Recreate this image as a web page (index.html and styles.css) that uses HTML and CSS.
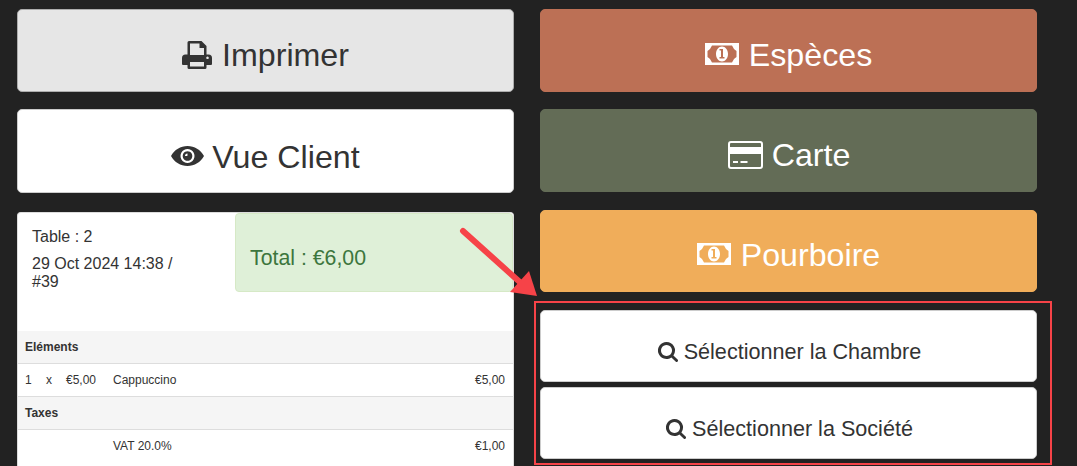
FILE: index.html
```html
<!DOCTYPE html>
<html lang="en">
<head>
    <meta charset="UTF-8">
    <meta name="viewport" content="width=device-width, initial-scale=1.0">
    <title>Paiement</title>
    <link rel="stylesheet" href="styles.css">
</head>
<body>
<div class="container">
    <div class="col col-left">
        <button class="btn btn-big btn-print">
            <svg class="icon" width="30" height="28" viewBox="0 0 30 28"><path fill-rule="evenodd" d="M5.500 1.500A1.500 1.500 0 0 1 7 0h12.500l5 5v8.500h2A3.500 3.500 0 0 1 30 17v6a1 1 0 0 1-1 1h-4.500v2.500a1.500 1.500 0 0 1-1.500 1.500H7a1.500 1.500 0 0 1-1.500-1.500V24H1a1 1 0 0 1-1-1v-6A3.500 3.500 0 0 1 3.500 13.500h2zM8 2.500V14h14V7h-4.500V2.500zM8 21v4.500h14V21zM25.500 15.500a1.300 1.300 0 1 0 .01 0z"/></svg>
            Imprimer
        </button>
        <button class="btn btn-big btn-view">
            <svg class="icon icon-eye" width="33" height="20" viewBox="0 0 33 20"><path fill-rule="evenodd" d="M0 10C3.500 3.800 9.500 0 16.500 0S29.500 3.800 33 10c-3.500 6.200-9.500 10-16.500 10S3.500 16.200 0 10zM16.500 3a7 7 0 1 0 .01 0zM16.500 5.200a4.800 4.800 0 1 1-.01 0zM16.500 7.500a2.500 2.500 0 0 0-2.500 2.500h2.200a.8.8 0 0 1 .3-.6z"/></svg>
            Vue Client
        </button>
        <div class="receipt">
            <div class="receipt-head">
                <div class="receipt-meta">
                    <p>Table : 2</p>
                    <p>29 Oct 2024 14:38 / #39</p>
                </div>
                <div class="receipt-total">Total : €6,00</div>
            </div>
            <table class="lines">
                <colgroup>
                    <col class="c-qty"><col class="c-x"><col class="c-price"><col><col class="c-sum">
                </colgroup>
                <tbody>
                    <tr class="group"><td colspan="5">Eléments</td></tr>
                    <tr><td>1</td><td>x</td><td>€5,00</td><td>Cappuccino</td><td class="num">€5,00</td></tr>
                    <tr class="group"><td colspan="5">Taxes</td></tr>
                    <tr><td></td><td></td><td></td><td>VAT 20.0%</td><td class="num">€1,00</td></tr>
                </tbody>
            </table>
        </div>
    </div>
    <div class="col col-right">
        <button class="btn btn-big btn-cash">
            <svg class="icon icon-money" width="34" height="22" viewBox="0 0 34 22"><path fill-rule="evenodd" d="M0 0h34v22H0zM7 2.500L5 6 2.500 8v6L5 16l2 3.500h20l2-3.500 2.500-2V8L29 6l-2-3.500zM17 3.500c3.300 0 6 3.400 6 7.500s-2.700 7.500-6 7.500-6-3.400-6-7.500 2.700-7.500 6-7.500zM14.500 6V7.500H16V14h-1.500v1.500h5V14H18V6z"/></svg>
            Espèces
        </button>
        <button class="btn btn-big btn-card">
            <svg class="icon" width="35" height="28" viewBox="0 0 35 28"><path fill-rule="evenodd" d="M3 0h29a3 3 0 0 1 3 3v22a3 3 0 0 1-3 3H3a3 3 0 0 1-3-3V3a3 3 0 0 1 3-3zM3 2a1 1 0 0 0-1 1v3h31V3a1 1 0 0 0-1-1zM2 13v12a1 1 0 0 0 1 1h29a1 1 0 0 0 1-1V13zM5 20h5v2H5zM12.500 20h7v2h-7z"/></svg>
            Carte
        </button>
        <button class="btn btn-big btn-tip">
            <svg class="icon icon-money" width="34" height="22" viewBox="0 0 34 22"><path fill-rule="evenodd" d="M0 0h34v22H0zM7 2.500L5 6 2.500 8v6L5 16l2 3.500h20l2-3.500 2.500-2V8L29 6l-2-3.500zM17 3.500c3.300 0 6 3.400 6 7.500s-2.700 7.500-6 7.500-6-3.400-6-7.500 2.700-7.500 6-7.500zM14.500 6V7.500H16V14h-1.500v1.500h5V14H18V6z"/></svg>
            Pourboire
        </button>
        <div class="select-group">
            <button class="btn btn-select">
                <svg class="icon" width="20" height="20" viewBox="0 0 20 20"><path fill-rule="evenodd" d="M8.500 0a8.500 8.500 0 0 1 6.900 13.400l4.200 4.200a1.400 1.400 0 0 1-2 2l-4.200-4.200A8.500 8.500 0 1 1 8.500 0zM8.500 3a5.500 5.500 0 1 0 .01 0z"/></svg>
                Sélectionner la Chambre
            </button>
            <button class="btn btn-select">
                <svg class="icon" width="20" height="20" viewBox="0 0 20 20"><path fill-rule="evenodd" d="M8.500 0a8.500 8.500 0 0 1 6.900 13.400l4.200 4.200a1.400 1.400 0 0 1-2 2l-4.200-4.200A8.500 8.500 0 1 1 8.500 0zM8.500 3a5.500 5.500 0 1 0 .01 0z"/></svg>
                Sélectionner la Société
            </button>
        </div>
    </div>
</div>

<!-- annotation drawn over the page -->
<div class="callout-box"></div>
<svg class="callout-arrow" width="90" height="80" viewBox="0 0 90 80">
    <path d="M5 5L64 58" stroke="#f64348" stroke-width="6" stroke-linecap="round" fill="none"/>
    <path d="M52 66L71 45L79 70z" fill="#f64348"/>
</svg>
</body>
</html>
```

FILE: styles.css
```css
html, body {
    height: 100%;
}
body {
    font-family: "Liberation Sans", Arial, sans-serif;
    margin: 0;
    padding: 0;
    background-color: #222;
    color: #333;
    overflow: hidden;
}
.container {
    display: grid;
    grid-template-columns: 497px 497px;
    column-gap: 26px;
    box-sizing: border-box;
    height: 100%;
    padding: 9px 0 0 17px;
}
.col {
    display: flex;
    flex-direction: column;
    gap: 17px;
    min-height: 0;
}
.btn {
    display: flex;
    align-items: center;
    justify-content: center;
    font-family: inherit;
    border: 1px solid #ccc;
    border-radius: 5px;
    background: #fff;
    color: #333;
    cursor: pointer;
    padding: 0;
}
.icon {
    fill: currentColor;
    flex: none;
}
.icon-eye {
    margin-bottom: 4px;
}
.icon-money {
    margin-bottom: 3px;
}
.btn-big {
    font-size: 32.2px;
    height: 83px;
    padding-top: 9px;
    gap: 8px;
}
.btn-print {
    background-color: #e6e6e6;
    border-color: #adadad;
    gap: 10px;
}
.btn-view {
    height: 84px;
    padding-top: 13px;
}
.btn-cash {
    background-color: #bc7055;
    border-color: #bc7055;
    color: #fff;
    gap: 10px;
}
.btn-card {
    background-color: #636c56;
    border-color: #636c56;
    color: #fff;
    padding-top: 9px;
    padding-left: 1px;
    gap: 9px;
}
.btn-tip {
    background-color: #f0ad5a;
    border-color: #f0ad5a;
    color: #fff;
    height: 82px;
    margin-top: 1px;
    gap: 10px;
}
.select-group {
    display: flex;
    flex-direction: column;
    gap: 5px;
    margin-top: 1px;
}
.btn-select {
    font-size: 21.6px;
    height: 72px;
    padding-top: 11px;
    padding-left: 2px;
    gap: 6px;
}
.receipt {
    flex: 1;
    margin-top: 2px;
    background: #fff;
    border-radius: 4px 4px 0 0;
    border: 1px solid #ddd;
    border-bottom: none;
    min-height: 0;
}
.receipt-head {
    display: flex;
    height: 118px;
}
.receipt-meta {
    width: 217px;
    box-sizing: border-box;
    padding: 15px 50px 0 14px;
    font-size: 16px;
    line-height: 18px;
}
.receipt-meta p {
    margin: 0 0 9px;
}
.receipt-total {
    flex: 1;
    display: flex;
    align-items: center;
    box-sizing: border-box;
    height: 79px;
    padding: 11px 14px 0;
    font-size: 21.3px;
    color: #3c763d;
    background-color: #dff0d8;
    border: 1px solid #d6e9c6;
    border-radius: 4px;
}
.lines {
    width: 100%;
    border-collapse: collapse;
    table-layout: fixed;
    font-size: 12px;
    line-height: 16px;
}
.c-qty { width: 28px; }
.c-x { width: 20px; }
.c-price { width: 47px; }
.c-sum { width: 70px; }
.lines td {
    border-top: 1px solid #ddd;
    padding: 8px 0;
}
.lines td:first-child {
    padding-left: 7px;
}
.lines .num {
    text-align: right;
    padding-right: 8px;
}
.lines .group td {
    background-color: #f5f5f5;
    font-weight: bold;
}
.lines tr:first-child td {
    border-top: none;
}
.callout-box {
    position: absolute;
    left: 534px;
    top: 301px;
    width: 514px;
    height: 160px;
    border: 2px solid #f64348;
}
.callout-arrow {
    position: absolute;
    left: 458px;
    top: 226px;
}
```
